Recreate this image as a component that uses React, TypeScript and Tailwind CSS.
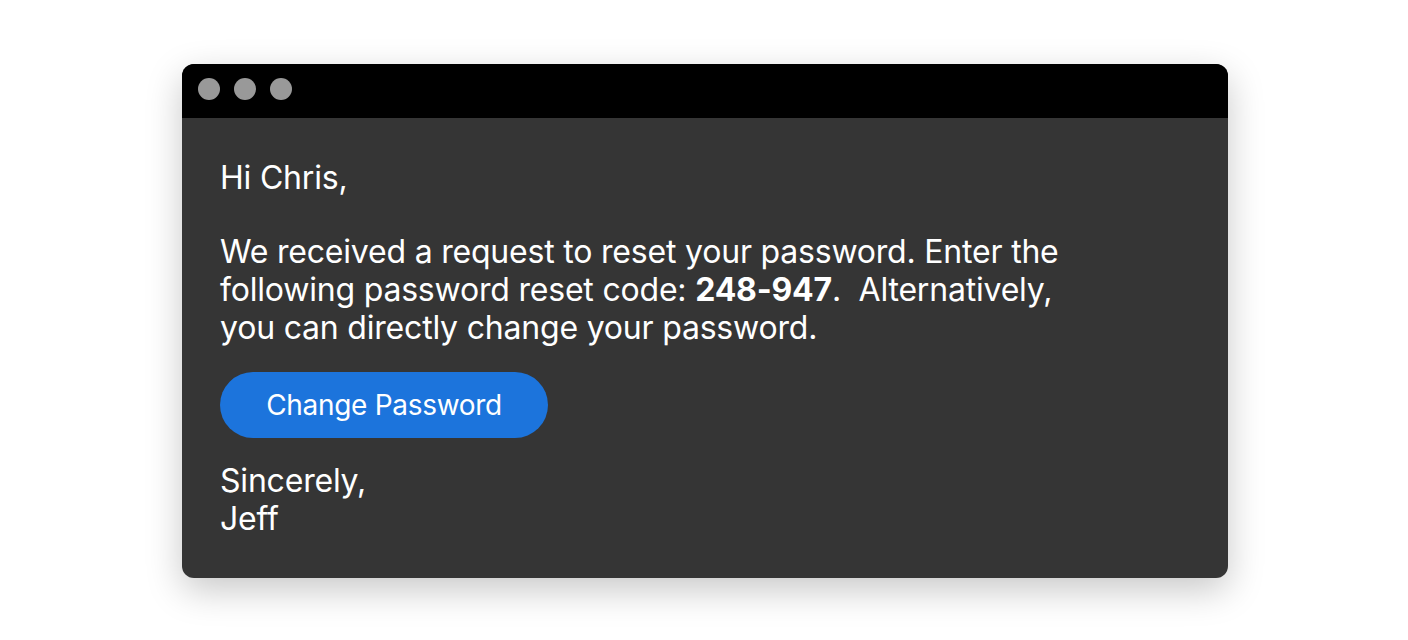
export default function App() {
  return (
    <div className="flex h-[640px] w-full items-start justify-center bg-white pl-[2px] pt-16" style={{ fontFamily: "Inter, 'Noto Sans', sans-serif" }}>
      {/* Email window */}
      <div className="w-[1046px] overflow-hidden rounded-xl bg-[#353535] shadow-[0_12px_36px_rgba(0,0,0,0.22)]">
        <div className="flex h-[54px] items-start gap-[14px] bg-black pl-4 pt-[14px]">
          <span className="h-[22px] w-[22px] rounded-full bg-[#999999]" />
          <span className="h-[22px] w-[22px] rounded-full bg-[#999999]" />
          <span className="h-[22px] w-[22px] rounded-full bg-[#999999]" />
        </div>
        <div className="px-[38px] pb-[40px] pt-[41px] text-[32px] leading-[38px] tracking-[-0.2px] text-white">
          <p>Hi Chris,</p>
          <p className="mt-[36px] max-w-[860px]">
            We received a request to reset your password. Enter the following password reset code:{" "}
            <span className="font-bold">248-947</span>.&nbsp; Alternatively, you can directly change your password.
          </p>
          <button className="mt-[25px] flex h-[66px] w-[328px] items-center justify-center rounded-full bg-[#1c74dc] text-[28px] tracking-[-0.3px] text-white">
            Change Password
          </button>
          <p className="mt-[24px]">
            Sincerely,
            <br />
            Jeff
          </p>
        </div>
      </div>
    </div>
  );
}
